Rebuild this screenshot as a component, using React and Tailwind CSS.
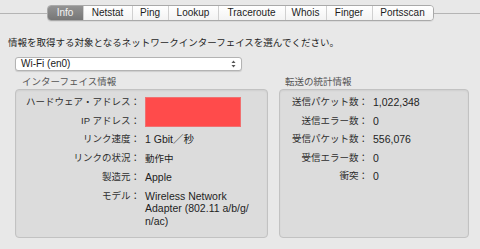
import React from 'react';

const font = { fontFamily: '"Liberation Sans", "Noto Sans CJK JP", sans-serif' };

const tabs = [
    { name: 'Info', w: 'w-[35px]' },
    { name: 'Netstat', w: 'w-[49px]' },
    { name: 'Ping', w: 'w-[36px]' },
    { name: 'Lookup', w: 'w-[50px]' },
    { name: 'Traceroute', w: 'w-[67px]' },
    { name: 'Whois', w: 'w-[41px]' },
    { name: 'Finger', w: 'w-[46px]' },
    { name: 'Portsscan', w: 'w-[61px]' },
];

const TabBar = () => (
    <div className="flex items-center h-[16px]">
        <div className="flex-1 h-px bg-[#b4b4b4]" />
        <div className="flex h-[16px] rounded-[4px] border border-[#a9a9a9] overflow-hidden shadow-[0_1px_0_rgba(0,0,0,0.06)]">
            {tabs.map((t, i) => (
                <div
                    key={t.name}
                    className={`${t.w} flex items-center justify-center text-[10px] leading-none ${i > 0 ? 'border-l border-[#d0d0d0]' : ''} ${
                        i === 0
                            ? 'bg-gradient-to-b from-[#939393] to-[#767676] text-[#f4f4f4]'
                            : 'bg-gradient-to-b from-white to-[#f3f3f3] text-[#1c1c1c]'
                    }`}
                >
                    {t.name}
                </div>
            ))}
        </div>
        <div className="flex-1 h-px bg-[#b4b4b4]" />
    </div>
);

const Label = ({ children }) => (
    <div className="col-start-1 text-right text-[9.5px] text-[#2e2e2e] leading-[12.5px]">{children}</div>
);

const Value = ({ children }) => (
    <div className="col-start-2 text-[10.5px] text-[#1e1e1e] leading-[12.5px]">{children}</div>
);

const App = () => {
    return (
        <div className="w-[480px] h-[249px] bg-[#e8e8e8] pt-[5px] overflow-hidden" style={font}>
            <TabBar />
            <p className="mt-[16px] ml-[8px] text-[9.5px] leading-[12px] text-[#1e1e1e]">
                情報を取得する対象となるネットワークインターフェイスを選んでください。
            </p>
            <div className="mt-[8px] ml-[15px] w-[227px] h-[14px] rounded-[3px] border border-[#b3b3b3] bg-white shadow-[0_1px_1px_rgba(0,0,0,0.12)] flex items-center justify-between pl-[5px] pr-[5px]">
                <span className="text-[10px] leading-none text-[#1a1a1a]">Wi-Fi (en0)</span>
                <svg width="5" height="8" viewBox="0 0 5 8">
                    <path d="M2.5 0.5 L4.5 3 L0.5 3 Z" fill="#555" />
                    <path d="M2.5 7.5 L4.5 5 L0.5 5 Z" fill="#555" />
                </svg>
            </div>
            <div className="mt-[5px] ml-[15px] flex gap-[11px]">
                <div className="w-[253px] flex flex-col">
                    <div className="pl-[7px] text-[9.5px] leading-[12px] text-[#555]">インターフェイス情報</div>
                    <div className="mt-px h-[149px] rounded-[4px] border border-[#c2c2c2] bg-[#dcdcdc] shadow-[inset_0_1px_2px_rgba(0,0,0,0.06)] pt-[6px]">
                        <div className="grid grid-cols-[124px_1fr] gap-x-[5px] gap-y-[6px] items-start">
                            <div className="col-start-2 row-start-1 row-span-2 self-stretch w-[96px] mt-px bg-[#ff4b4b] border border-[#f07070]" />
                            <Label>ハードウェア・アドレス：</Label>
                            <Label>IP アドレス：</Label>
                            <Label>リンク速度：</Label>
                            <Value>1 Gbit／秒</Value>
                            <Label>リンクの状況：</Label>
                            <Value>
                                <span className="text-[9.5px]">動作中</span>
                            </Value>
                            <Label>製造元：</Label>
                            <Value>Apple</Value>
                            <Label>モデル：</Label>
                            <Value>
                                Wireless Network
                                <br />
                                Adapter (802.11 a/b/g/
                                <br />
                                n/ac)
                            </Value>
                        </div>
                    </div>
                </div>
                <div className="w-[190px] flex flex-col">
                    <div className="pl-[6px] text-[9.5px] leading-[12px] text-[#555]">転送の統計情報</div>
                    <div className="mt-px h-[149px] rounded-[4px] border border-[#c2c2c2] bg-[#dcdcdc] shadow-[inset_0_1px_2px_rgba(0,0,0,0.06)] pt-[6px]">
                        <div className="grid grid-cols-[88px_1fr] gap-x-[5px] gap-y-[6px]">
                            <Label>送信パケット数：</Label>
                            <Value>1,022,348</Value>
                            <Label>送信エラー数：</Label>
                            <Value>0</Value>
                            <Label>受信パケット数：</Label>
                            <Value>556,076</Value>
                            <Label>受信エラー数：</Label>
                            <Value>0</Value>
                            <Label>衝突：</Label>
                            <Value>0</Value>
                        </div>
                    </div>
                </div>
            </div>
        </div>
    );
};

export default App;
